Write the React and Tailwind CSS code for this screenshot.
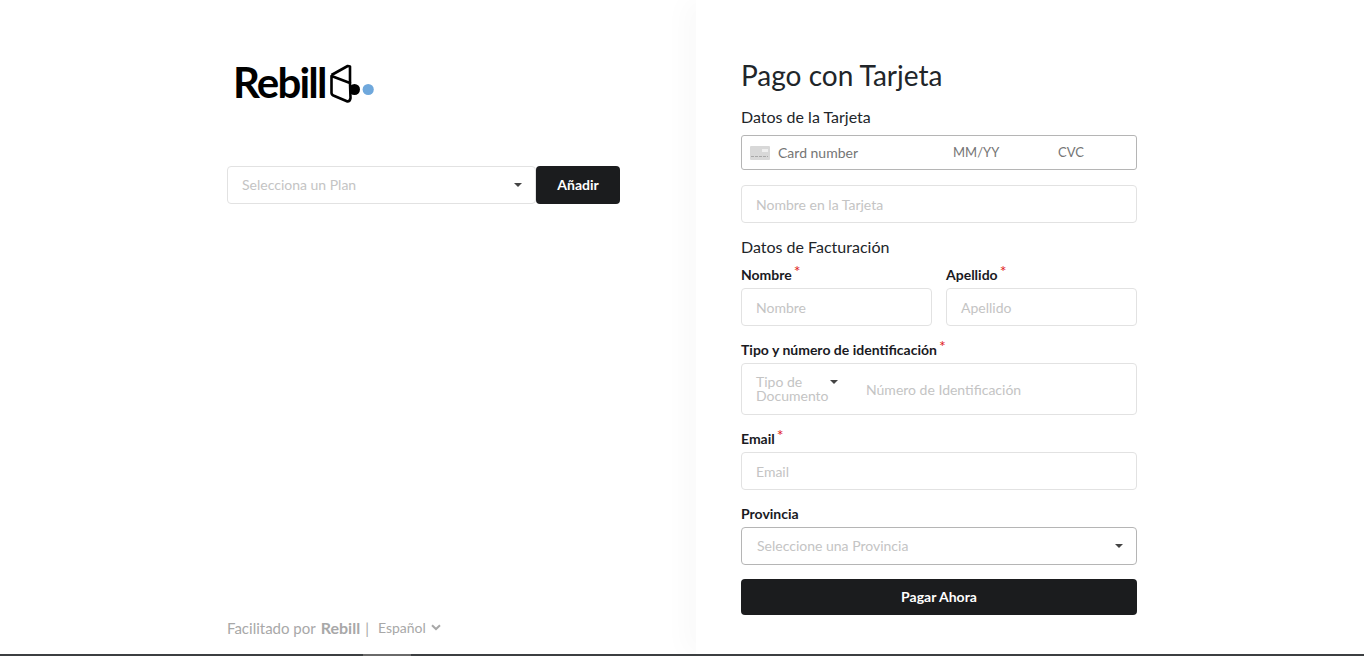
function Caret({ className = "" }) {
  return <span className={`w-0 h-0 border-x-[4px] border-x-transparent border-t-[4px] border-t-[#444] ${className}`} />;
}

function Label({ children, required, className = "" }) {
  return (
    <div className={`flex text-[14px] leading-[16px] font-bold text-[#1a1a1f] ${className}`}>
      <span>{children}</span>
      {required && <span className="text-[#e02020] font-normal text-[16px] leading-[16px] ml-[2px] -mt-[4px]">*</span>}
    </div>
  );
}

function Field({ placeholder, className = "" }) {
  return (
    <div className={`h-[38px] border border-[#e2e2e2] rounded-[4px] flex items-center pl-[14px] text-[14px] text-[#c4c4c4] ${className}`}>
      {placeholder}
    </div>
  );
}

function CardIcon() {
  return (
    <svg width="20" height="14" viewBox="0 0 20 14" className="shrink-0">
      <rect width="20" height="14" rx="1" fill="#d8d8d8" />
      <rect x="12" y="3" width="6" height="3" fill="#efefef" />
      <path d="M1 10.5 H18" stroke="#a8a8a8" strokeWidth="1" strokeDasharray="3 1" />
    </svg>
  );
}

function Logo() {
  return (
    <div className="flex items-start h-[46px] mt-[60px] ml-[6px]">
      <span className="w-[92px] font-['Lato',sans-serif] text-[42px] leading-[44px] font-bold text-black tracking-[-1.8px]">Rebill</span>
      <svg width="55" height="46" viewBox="0 0 55 46">
        <circle cx="29.5" cy="29.5" r="5.5" fill="#000" />
        <path d="M6.5 15 L22.7 6 L25 6.5 V23" fill="none" stroke="#000" strokeWidth="2.6" strokeLinejoin="round" />
        <path d="M6.5 16 L25 23 L25.5 38 Q25 41.5 22.5 41.5 L9.5 36 Q6.5 35 6.5 33 Z" fill="#fff" stroke="#000" strokeWidth="2.6" strokeLinejoin="round" />
        <circle cx="43.2" cy="29.5" r="5.6" fill="#6fa8dc" />
      </svg>
    </div>
  );
}

export default function App() {
  return (
    <div className="h-[656px] flex flex-col bg-white overflow-hidden font-['Lato',sans-serif]">
      <div className="flex-1 min-h-0 flex">
        {/* Left: plan */}
        <aside className="w-[696px] shrink-0 flex flex-col pl-[227px]">
          <Logo />
          <div className="flex mt-[60px] w-[393px]">
            <div className="flex-1 h-[38px] border border-[#e2e2e2] rounded-[4px] flex items-center justify-between pl-[14px] pr-[13px] pb-[1px] text-[14px] text-[#c4c4c4]">
              Selecciona un Plan
              <Caret />
            </div>
            <button className="w-[84px] h-[38px] bg-[#1b1c1e] rounded-[4px] text-white text-[14px] font-bold pb-[1px]">Añadir</button>
          </div>
          <div className="mt-auto mb-[16px] flex items-center text-[#a8a8a8]">
            <span className="text-[15px] leading-[20px]">Facilitado por</span>
            <b className="ml-[5px] text-[16px] leading-[20px]">Rebill</b>
            <span className="ml-[5px] text-[15px] leading-[20px]">|</span>
            <span className="ml-[9px] mt-[1px] text-[14px] leading-[20px]">Español</span>
            <svg width="10" height="7" viewBox="0 0 10 7" className="ml-[5px]">
              <path d="M1 1.2 L5 5 L9 1.2" fill="none" stroke="#a8a8a8" strokeWidth="2" />
            </svg>
          </div>
        </aside>

        {/* Right: form */}
        <main className="flex-1 pl-[45px] shadow-[-12px_0_24px_rgba(0,0,0,0.025)]">
          <div className="w-[396px]">
            <h1 className="mt-[57px] text-[28px] leading-[36px] font-normal text-[#212529]">Pago con Tarjeta</h1>
            <p className="mt-[14px] text-[16px] leading-[20px] text-[#212529]">Datos de la Tarjeta</p>
            <div className="mt-[8px] h-[35px] border border-[#b5b5b5] rounded-[3px] flex items-center pl-[8px] text-[14px] text-[#757575]">
              <CardIcon />
              <span className="ml-[8px] w-[175px]">Card number</span>
              <span className="w-[105px] text-[13px] mt-[1px]">MM/YY</span>
              <span className="text-[13px] mt-[1px]">CVC</span>
            </div>
            <Field placeholder="Nombre en la Tarjeta" className="mt-[15px]" />
            <p className="mt-[14px] text-[16px] leading-[20px] text-[#212529]">Datos de Facturación</p>
            <div className="mt-[10px] grid grid-cols-2 gap-x-[14px]">
              <div>
                <Label required>Nombre</Label>
                <Field placeholder="Nombre" className="mt-[5px]" />
              </div>
              <div>
                <Label required>Apellido</Label>
                <Field placeholder="Apellido" className="mt-[5px]" />
              </div>
            </div>
            <Label required className="mt-[16px]">Tipo y número de identificación</Label>
            <div className="mt-[5px] h-[52px] border border-[#e2e2e2] rounded-[4px] flex items-center pl-[14px] text-[14px] text-[#c4c4c4]">
              <span className="w-[74px] leading-[14px]">Tipo de Documento</span>
              <Caret className="self-start mt-[16px]" />
              <span className="ml-[28px]">Número de Identificación</span>
            </div>
            <Label required className="mt-[16px]">Email</Label>
            <Field placeholder="Email" className="mt-[5px]" />
            <Label className="mt-[16px]">Provincia</Label>
            <div className="mt-[5px] h-[38px] border border-[#b5b5b5] rounded-[4px] flex items-center justify-between pl-[15px] pr-[13px] pb-[1px] text-[14px] text-[#c4c4c4]">
              Seleccione una Provincia
              <Caret />
            </div>
            <button className="mt-[14px] w-full h-[36px] bg-[#1b1c1e] rounded-[4px] text-white text-[14px] font-bold pb-[1px]">Pagar Ahora</button>
          </div>
        </main>
      </div>
      {/* window edge at the very bottom */}
      <div className="h-[2px] shrink-0 bg-[#3c3f41] flex pl-[363px]">
        <span className="w-[48px] bg-[#6a6a6a]" />
      </div>
    </div>
  );
}
